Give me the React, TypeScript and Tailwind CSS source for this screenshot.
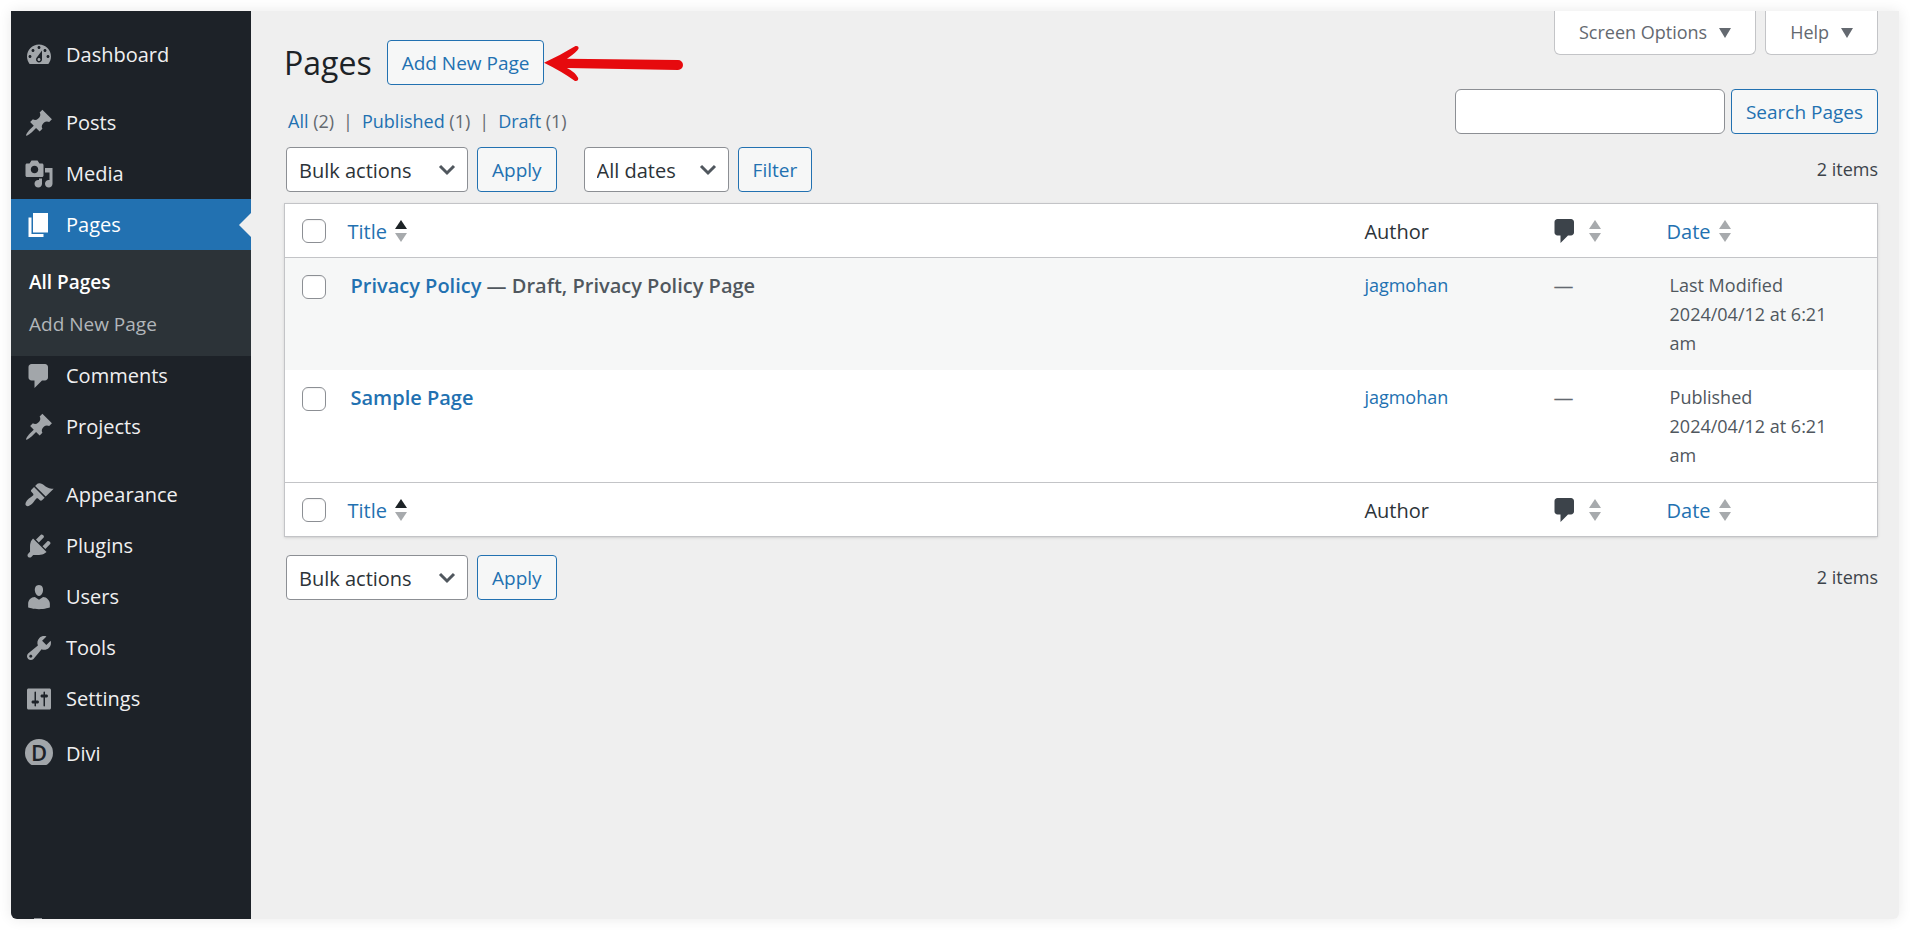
import { useState } from "react";

const icons = {
  dashboard:
    "M3.76 16h12.48c1.1-1.37 1.76-3.11 1.76-5 0-4.42-3.58-8-8-8s-8 3.58-8 8c0 1.89.66 3.63 1.76 5zM10 4c.55 0 1 .45 1 1s-.45 1-1 1-1-.45-1-1 .45-1 1-1zM6 6c.55 0 1 .45 1 1s-.45 1-1 1-1-.45-1-1 .45-1 1-1zm8 0c.55 0 1 .45 1 1s-.45 1-1 1-1-.45-1-1 .45-1 1-1zm-5.37 5.55L12 7v6c0 1.1-.9 2-2 2s-2-.9-2-2c0-.57.24-1.08.63-1.45zM4 10c.55 0 1 .45 1 1s-.45 1-1 1-1-.45-1-1 .45-1 1-1zm12 0c.55 0 1 .45 1 1s-.45 1-1 1-1-.45-1-1 .45-1 1-1zm-5 3c0-.55-.45-1-1-1s-1 .45-1 1 .45 1 1 1 1-.45 1-1z",
  pin: "M10.44 3.02l1.82-1.82 6.36 6.35-1.83 1.82c-1.05-.68-2.48-.57-3.41.36l-.75.75c-.92.93-1.04 2.35-.35 3.41l-1.83 1.82-2.41-2.41-2.8 2.79c-.42.42-3.38 2.71-3.8 2.29s1.86-3.39 2.28-3.81l2.79-2.79L4.1 9.36l1.83-1.82c1.05.69 2.48.57 3.4-.36l.75-.75c.93-.92 1.05-2.35.36-3.41z",
  media:
    "M13 11V4c0-.55-.45-1-1-1h-1.67L9 1H5L3.67 3H2c-.55 0-1 .45-1 1v7c0 .55.45 1 1 1h10c.55 0 1-.45 1-1zM7 4.5c1.38 0 2.5 1.12 2.5 2.5S8.38 9.5 7 9.5 4.5 8.38 4.5 7 5.62 4.5 7 4.5zM14 6h5v10.5c0 1.38-1.12 2.5-2.5 2.5S14 17.88 14 16.5s1.12-2.5 2.5-2.5c.17 0 .34.02.5.05V9h-3V6zm-4 8.05V13h2v3.5c0 1.38-1.12 2.5-2.5 2.5S7 17.88 7 16.5 8.12 14 9.5 14c.17 0 .34.02.5.05z",
  page: "M6 15V2h10v13H6zm-1 1h8v2H3V5h2v11z",
  comment:
    "M5 2h9c1.1 0 2 .9 2 2v7c0 1.1-.9 2-2 2h-2l-5 5v-5H5c-1.1 0-2-.9-2-2V4c0-1.1.9-2 2-2z",
  brush:
    "M14.48 11.06L7.41 3.99l1.5-1.5c.5-.56 2.3-.47 3.51.32 1.21.8 1.43 1.28 2.91 2.1 1.18.64 2.45 1.26 4.45.85zm-.71.71L6.7 4.7 4.93 6.47c-.39.39-.39 1.02 0 1.41l1.06 1.06c.39.39.39 1.03 0 1.42-.6.6-1.43 1.11-2.21 1.69-.35.26-.7.53-1.01.84C1.43 14.23.4 16.08 1.4 17.07c.99 1 2.84-.03 4.18-1.36.31-.31.58-.66.85-1.02.57-.78 1.08-1.61 1.69-2.21.39-.39 1.02-.39 1.41 0l1.06 1.06c.39.39 1.02.39 1.41 0z",
  plug: "M13.11 4.36L9.87 7.6 8 5.73l3.24-3.24c.35-.34 1.05-.2 1.56.32.52.51.66 1.21.31 1.55zm-8 1.77l.91-1.12 9.01 9.01-1.19.84c-.71.71-2.63 1.16-3.82 1.16H6.14L4.9 17.26c-.59.59-1.54.59-2.12 0-.59-.58-.59-1.53 0-2.12l1.24-1.24v-3.88c0-1.13.4-3.19 1.09-3.89zm7.26 3.97l3.24-3.24c.34-.35 1.04-.21 1.55.31.52.51.66 1.21.31 1.55l-3.24 3.25z",
  user: "M10 9.25c-2.27 0-2.73-3.44-2.73-3.44C7 4.02 7.82 2 9.97 2c2.16 0 2.98 2.02 2.71 3.81 0 0-.41 3.44-2.68 3.44zm0 2.57L12.72 10c2.39 0 4.52 2.33 4.52 4.53v2.49s-3.65 1.13-7.24 1.13c-3.65 0-7.24-1.13-7.24-1.13v-2.49c0-2.25 1.94-4.48 4.47-4.48z",
  wrench:
    "M16.68 9.77c-1.34 1.34-3.3 1.67-4.95.99l-5.41 6.52c-.99.99-2.59.99-3.58 0s-.99-2.59 0-3.57l6.52-5.42c-.68-1.65-.35-3.61.99-4.95 1.28-1.28 3.12-1.62 4.72-1.06l-2.89 2.89 2.82 2.82 2.86-2.87c.53 1.58.18 3.39-1.08 4.65zM3.81 16.21c.4.39 1.04.39 1.43 0 .4-.4.4-1.04 0-1.43-.39-.4-1.03-.4-1.43 0-.39.39-.39 1.03 0 1.43z",
  settings:
    "M18 16V4c0-.55-.45-1-1-1H3c-.55 0-1 .45-1 1v12c0 .55.45 1 1 1h14c.55 0 1-.45 1-1zM8 11h1c.55 0 1 .45 1 1s-.45 1-1 1H8v1.5c0 .28-.22.5-.5.5s-.5-.22-.5-.5V13H6c-.55 0-1-.45-1-1s.45-1 1-1h1V5.5c0-.28.22-.5.5-.5s.5.22.5.5V11zm5-2h-1c-.55 0-1-.45-1-1s.45-1 1-1h1V5.5c0-.28.22-.5.5-.5s.5.22.5.5V7h1c.55 0 1 .45 1 1s-.45 1-1 1h-1v5.5c0 .28-.22.5-.5.5s-.5-.22-.5-.5V9z",
};

type IconName = keyof typeof icons;

const pages = [
  {
    id: 3,
    title: "Privacy Policy",
    state: " — Draft, Privacy Policy Page",
    author: "jagmohan",
    status: "Last Modified",
    date: "2024/04/12 at 6:21 am",
  },
  {
    id: 2,
    title: "Sample Page",
    state: "",
    author: "jagmohan",
    status: "Published",
    date: "2024/04/12 at 6:21 am",
  },
];

function Icon({ name, className }: { name: IconName; className: string }) {
  return (
    <svg viewBox="0 0 20 20" fill="currentColor" fillRule="evenodd" aria-hidden="true" className={className}>
      <path d={icons[name]} />
    </svg>
  );
}

function MenuItem({ icon, label, active }: { icon: IconName; label: string; active?: boolean }) {
  return (
    <li>
      <a
        href="#"
        className={
          active
            ? "relative flex h-[51px] items-center gap-3 bg-[#2271b1] pl-[13px] text-white"
            : "flex h-[51px] items-center gap-3 pl-[13px] text-[#f0f0f1]"
        }
      >
        <Icon name={icon} className={active ? "size-[30px]" : "size-[30px] text-[#a2a6aa]"} />
        {label}
        {active && (
          <span className="absolute right-0 border-y-12 border-r-12 border-y-transparent border-r-[#efefef]" />
        )}
      </a>
    </li>
  );
}

function Sidebar() {
  return (
    <nav className="flex w-60 shrink-0 flex-col overflow-hidden rounded-bl-md bg-[#1d2228] pt-[18px] text-[20px]">
      <ul>
        <MenuItem icon="dashboard" label="Dashboard" />
      </ul>
      <ul className="mt-[17px]">
        <MenuItem icon="pin" label="Posts" />
        <MenuItem icon="media" label="Media" />
        <MenuItem icon="page" label="Pages" active />
      </ul>
      {/* the next group overlaps the foot of the submenu */}
      <ul className="-mb-1.5 bg-[#2c3338] py-[11px] text-[19px]">
        <li>
          <a href="#" className="flex h-[42px] items-center pl-[18px] font-semibold text-white">
            All Pages
          </a>
        </li>
        <li>
          <a href="#" className="flex h-[42px] items-center pl-[18px] text-[#b2b6ba]">
            Add New Page
          </a>
        </li>
      </ul>
      <ul>
        <MenuItem icon="comment" label="Comments" />
        <MenuItem icon="pin" label="Projects" />
      </ul>
      <ul className="mt-[17px]">
        <MenuItem icon="brush" label="Appearance" />
        <MenuItem icon="plug" label="Plugins" />
        <MenuItem icon="user" label="Users" />
        <MenuItem icon="wrench" label="Tools" />
        <MenuItem icon="settings" label="Settings" />
      </ul>
      <a href="#" className="mt-1 flex h-[51px] items-center gap-3 pl-[13px] text-[#f0f0f1]">
        <svg viewBox="0 0 30 26" aria-hidden="true" className="mb-1 h-[26px] w-[30px]">
          <circle cx="15" cy="14" r="14" fill="#a2a6aa" />
          <text x="15" y="22" textAnchor="middle" fill="#1d2228" className="text-[22px] font-semibold">
            D
          </text>
        </svg>
        Divi
      </a>
      <button type="button" aria-label="Collapse menu" className="mt-auto h-px overflow-hidden pl-[23px]">
        <span className="block h-px w-2 bg-[#8c9095]" />
      </button>
    </nav>
  );
}

function Button({ name }: { name: string }) {
  return (
    <button
      type="button"
      className="h-[45px] rounded border border-[#2271b1] bg-[#f6f7f7] px-[14px] pt-[2px] text-[19px] whitespace-nowrap text-[#2271b1]"
    >
      {name}
    </button>
  );
}

function Select({ label, options, width }: { label: string; options: string[]; width: string }) {
  return (
    <div className={`relative flex items-center ${width}`}>
      <select
        aria-label={label}
        className="h-[45px] w-full appearance-none rounded border border-[#8c8f94] bg-white pt-[2px] pl-3 text-[20px] text-[#2c3338]"
      >
        {options.map((option) => (
          <option key={option}>{option}</option>
        ))}
      </select>
      <svg
        viewBox="0 0 18 12"
        fill="none"
        stroke="#50575e"
        strokeWidth="3"
        className="pointer-events-none absolute right-3 h-3 w-[18px]"
      >
        <path d="M2 2l7 7 7-7" />
      </svg>
    </div>
  );
}

function BulkActions() {
  return (
    <div className="flex gap-[9px]">
      <Select label="Select bulk action" options={["Bulk actions", "Edit", "Move to Trash"]} width="w-[182px]" />
      <Button name="Apply" />
    </div>
  );
}

function SortArrows({ sorted }: { sorted?: boolean }) {
  return (
    <svg viewBox="0 0 12 22" aria-hidden="true" className="h-[22px] w-3">
      <path d="M0 9l6-9 6 9z" fill={sorted ? "#1d2327" : "#a7aaad"} />
      <path d="M0 13h12l-6 9z" fill="#a7aaad" />
    </svg>
  );
}

function CheckBox({ label }: { label: string }) {
  const [checked, setChecked] = useState(false);
  return (
    <input
      type="checkbox"
      aria-label={label}
      checked={checked}
      onChange={() => setChecked(!checked)}
      className="block size-6 appearance-none rounded-md border border-[#8c8f94] bg-white inset-shadow-xs checked:bg-[#2271b1]"
    />
  );
}

function HeadingRow() {
  return (
    <tr className="h-[54px] text-left text-[20px]">
      <td className="pl-[17px]">
        <CheckBox label="Select All" />
      </td>
      <th scope="col" className="pl-3 font-normal">
        <a href="#" className="flex items-center gap-2 text-[#2271b1]">
          <span className="pt-[2px]">Title</span>
          <SortArrows sorted />
        </a>
      </th>
      <th scope="col" className="pt-[2px] pl-[14px] font-normal text-[#2c3338]">
        Author
      </th>
      <th scope="col" className="pl-2 font-normal">
        <a href="#" aria-label="Comments" className="flex items-center gap-[9px] text-[#3c434a]">
          <Icon name="comment" className="size-[30px]" />
          <SortArrows />
        </a>
      </th>
      <th scope="col" className="pl-3 font-normal">
        <a href="#" className="flex items-center gap-2 text-[#2271b1]">
          <span className="pt-[2px]">Date</span>
          <SortArrows />
        </a>
      </th>
    </tr>
  );
}

function PagesTable() {
  return (
    <table className="w-full table-fixed border border-[#c3c4c7] bg-white shadow-sm">
      <colgroup>
        <col className="w-[51px]" />
        <col />
        <col className="w-[12%]" />
        <col className="w-[113px]" />
        <col className="w-[14%]" />
      </colgroup>
      <thead className="border-b border-[#c3c4c7]">
        <HeadingRow />
      </thead>
      <tbody>
        {pages.map((page) => (
          <tr key={page.id} className="align-top leading-[29px] odd:bg-[#f6f7f7]">
            <td className="pt-[17px] pl-[17px]">
              <CheckBox label={`Select ${page.title}`} />
            </td>
            <td className="pt-[13px] pl-[15px] text-[20px] font-semibold text-[#50575e]">
              <a href="#" className="text-[#2271b1]">
                {page.title}
              </a>
              {page.state}
            </td>
            <td className="pt-[13px] pl-[14px]">
              <a href="#" className="text-[#2271b1]">
                {page.author}
              </a>
            </td>
            <td className="pt-[13px] pl-3 text-[20px] text-[#646970]">—</td>
            <td className="pt-[13px] pr-6 pb-3 pl-[15px] text-[#50575e]">
              {page.status}
              <br />
              {page.date}
            </td>
          </tr>
        ))}
      </tbody>
      <tfoot className="border-t border-[#c3c4c7]">
        <HeadingRow />
      </tfoot>
    </table>
  );
}

function ScreenTab({ name }: { name: string }) {
  return (
    <button
      type="button"
      className="flex h-11 items-center gap-3 rounded-b-md border border-t-0 border-[#c3c4c7] bg-white px-6 text-[#646970]"
    >
      {name}
      <svg viewBox="0 0 12 10" aria-hidden="true" className="h-[10px] w-3">
        <path d="M0 0h12L6 10z" fill="currentColor" />
      </svg>
    </button>
  );
}

export default function App() {
  return (
    <div className="flex min-h-screen bg-white pt-[11px] pr-3 pb-3 pl-[11px] font-['Open_Sans','Noto_Sans',sans-serif] text-[18px] leading-[29px] text-[#3c434a]">
      <div className="flex grow rounded-b-md bg-[#efefef] shadow-[0_0_14px_rgba(0,0,0,0.09)]">
        <Sidebar />
        <main className="grow pr-[21px] pl-[33px]">
          <div className="flex items-start justify-between">
            <div className="flex items-center gap-[15px] pt-[29px]">
              <h1 className="text-[32px] text-[#1d2327]">Pages</h1>
              <div className="relative">
                <Button name="Add New Page" />
                <svg viewBox="0 0 140 40" className="absolute top-1 left-full h-10 w-[140px]" aria-hidden="true">
                  <path
                    fill="#e60a0e"
                    d="M0 18.7Q16 11.500 31.500 2Q35 1.500 34.500 4.800Q33 8 23 14.700L134 16A5 5 0 0 1 134 26L23 24Q31 28 34.200 34Q34.500 37.500 31 37Q18 27.500 0 18.7z"
                  />
                </svg>
              </div>
            </div>
            <div className="flex gap-[9px]">
              <ScreenTab name="Screen Options" />
              <ScreenTab name="Help" />
            </div>
          </div>
          <div className="flex justify-between">
            <ul className="flex gap-[9px] pt-[22px] pl-1 text-[#646970]">
              <li>
                <a href="#" className="text-[#2271b1]">All</a> (2)
              </li>
              <li>|</li>
              <li>
                <a href="#" className="text-[#2271b1]">Published</a> (1)
              </li>
              <li>|</li>
              <li>
                <a href="#" className="text-[#2271b1]">Draft</a> (1)
              </li>
            </ul>
            <form className="flex gap-[6px] pt-1" onSubmit={(e) => e.preventDefault()}>
              <input
                type="search"
                aria-label="Search Pages"
                className="h-[45px] w-[270px] rounded-md border border-[#8c8f94] bg-white px-3"
              />
              <Button name="Search Pages" />
            </form>
          </div>
          <div className="flex items-center justify-between pt-[11px] pb-[11px] pl-[2px]">
            <div className="flex gap-[27px]">
              <BulkActions />
              <div className="flex gap-[9px]">
                <Select label="Filter by date" options={["All dates", "April 2024"]} width="w-[145px]" />
                <Button name="Filter" />
              </div>
            </div>
            <p>2 items</p>
          </div>
          <PagesTable />
          <div className="flex items-center justify-between pt-[18px] pl-[2px]">
            <BulkActions />
            <p>2 items</p>
          </div>
        </main>
      </div>
    </div>
  );
}
